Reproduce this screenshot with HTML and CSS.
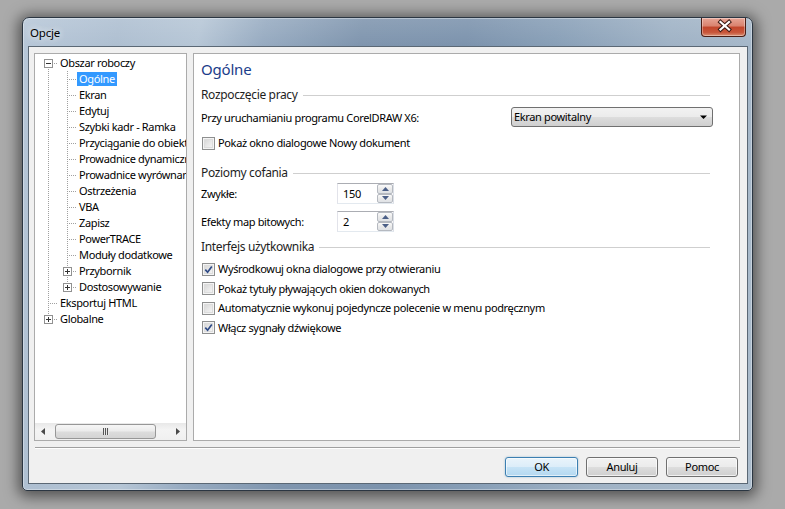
FILE: index.html
```html
<!DOCTYPE html>
<html lang="pl">
<head>
<meta charset="utf-8">
<title>Opcje</title>
<link rel="stylesheet" href="styles.css">
</head>
<body>
<div class="window">
  <div class="titlebar">
    <span class="title">Opcje</span>
    <div class="close">
      <svg width="45" height="19" viewBox="0 0 45 19">
        <path d="M19.5 5 L28 12.5 M28 5 L19.5 12.5" stroke="#3b1a14" stroke-width="4.2" stroke-linecap="square" fill="none"/>
        <path d="M19.5 5 L28 12.5 M28 5 L19.5 12.5" stroke="#ffffff" stroke-width="2.2" stroke-linecap="square" fill="none"/>
      </svg>
    </div>
  </div>
  <div class="client">
    <div class="panels">
      <div class="tree-panel">
        <div class="tree">
          <div class="row"><span class="cell first"><svg class="box" width="9" height="9" viewBox="0 0 9 9"><rect x=".5" y=".5" width="8" height="8" fill="#fff" stroke="#919191"/><path d="M2 4.5h5" stroke="#333"/></svg></span><span class="label">Obszar roboczy</span></div>
          <div class="row"><span class="cell v"></span><span class="cell tee"></span><span class="label sel">Ogólne</span></div>
          <div class="row"><span class="cell v"></span><span class="cell tee"></span><span class="label">Ekran</span></div>
          <div class="row"><span class="cell v"></span><span class="cell tee"></span><span class="label">Edytuj</span></div>
          <div class="row"><span class="cell v"></span><span class="cell tee"></span><span class="label">Szybki kadr - Ramka</span></div>
          <div class="row"><span class="cell v"></span><span class="cell tee"></span><span class="label">Przyciąganie do obiektów</span></div>
          <div class="row"><span class="cell v"></span><span class="cell tee"></span><span class="label">Prowadnice dynamiczne</span></div>
          <div class="row"><span class="cell v"></span><span class="cell tee"></span><span class="label">Prowadnice wyrównania</span></div>
          <div class="row"><span class="cell v"></span><span class="cell tee"></span><span class="label">Ostrzeżenia</span></div>
          <div class="row"><span class="cell v"></span><span class="cell tee"></span><span class="label">VBA</span></div>
          <div class="row"><span class="cell v"></span><span class="cell tee"></span><span class="label">Zapisz</span></div>
          <div class="row"><span class="cell v"></span><span class="cell tee"></span><span class="label">PowerTRACE</span></div>
          <div class="row"><span class="cell v"></span><span class="cell tee"></span><span class="label">Moduły dodatkowe</span></div>
          <div class="row"><span class="cell v"></span><span class="cell tee"><svg class="box" width="9" height="9" viewBox="0 0 9 9"><rect x=".5" y=".5" width="8" height="8" fill="#fff" stroke="#919191"/><path d="M2 4.5h5M4.5 2v5" stroke="#333"/></svg></span><span class="label">Przybornik</span></div>
          <div class="row"><span class="cell v"></span><span class="cell ell"><svg class="box" width="9" height="9" viewBox="0 0 9 9"><rect x=".5" y=".5" width="8" height="8" fill="#fff" stroke="#919191"/><path d="M2 4.5h5M4.5 2v5" stroke="#333"/></svg></span><span class="label">Dostosowywanie</span></div>
          <div class="row"><span class="cell tee"></span><span class="label">Eksportuj HTML</span></div>
          <div class="row"><span class="cell ell"><svg class="box" width="9" height="9" viewBox="0 0 9 9"><rect x=".5" y=".5" width="8" height="8" fill="#fff" stroke="#919191"/><path d="M2 4.5h5M4.5 2v5" stroke="#333"/></svg></span><span class="label">Globalne</span></div>
        </div>
        <div class="hscroll">
          <div class="sb-arrow"><svg width="17" height="17" viewBox="0 0 17 17"><path d="M6 8.5 L10 5 L10 12 Z" fill="#4a4a4a"/></svg></div>
          <div class="sb-thumb"><svg width="8" height="7" viewBox="0 0 8 7"><path d="M1.5 0v7M3.5 0v7M5.5 0v7" stroke="#555" stroke-width="1"/><path d="M2.5 0v7M4.5 0v7M6.5 0v7" stroke="#e8e8e8" stroke-width="1"/></svg></div>
          <div class="sb-rest"></div>
          <div class="sb-arrow"><svg width="17" height="17" viewBox="0 0 17 17"><path d="M11 8.5 L7 5 L7 12 Z" fill="#4a4a4a"/></svg></div>
        </div>
      </div>
      <div class="page">
        <div class="heading">Ogólne</div>
        <div class="group g1"><span class="group-text">Rozpoczęcie pracy</span><span class="group-line"></span></div>
        <div class="dd-row">
          <span class="dd-label">Przy uruchamianiu programu CorelDRAW X6:</span>
          <div class="combo"><span class="combo-text">Ekran powitalny</span><svg width="9" height="6" viewBox="0 0 9 6"><path d="M1 1.5 L8 1.5 L4.5 5 Z" fill="#000"/></svg></div>
        </div>
        <div class="cb-row first-cb"><span class="cb"><span class="cb-in"></span></span><span class="cb-text">Pokaż okno dialogowe Nowy dokument</span></div>
        <div class="group g2"><span class="group-text">Poziomy cofania</span><span class="group-line"></span></div>
        <div class="spin-row s1">
          <span class="spin-label">Zwykłe:</span>
          <div class="spin"><span class="spin-text">150</span><span class="spin-btns"><span class="sbtn"><svg width="7" height="4" viewBox="0 0 7 4"><path d="M0 4 L3.5 0 L7 4 Z" fill="#4b5f87"/></svg></span><span class="sbtn"><svg width="7" height="4" viewBox="0 0 7 4"><path d="M0 0 L7 0 L3.5 4 Z" fill="#4b5f87"/></svg></span></span></div>
        </div>
        <div class="spin-row s2">
          <span class="spin-label">Efekty map bitowych:</span>
          <div class="spin"><span class="spin-text">2</span><span class="spin-btns"><span class="sbtn"><svg width="7" height="4" viewBox="0 0 7 4"><path d="M0 4 L3.5 0 L7 4 Z" fill="#4b5f87"/></svg></span><span class="sbtn"><svg width="7" height="4" viewBox="0 0 7 4"><path d="M0 0 L7 0 L3.5 4 Z" fill="#4b5f87"/></svg></span></span></div>
        </div>
        <div class="group g3"><span class="group-text">Interfejs użytkownika</span><span class="group-line"></span></div>
        <div class="checks">
          <div class="cb-row2"><span class="cb"><span class="cb-in"><svg width="9" height="9" viewBox="0 0 9 9"><path d="M1.3 4.6 L3.6 7.2 L7.8 1.4" stroke="#2e4a86" stroke-width="1.7" fill="none"/></svg></span></span><span class="cb-text">Wyśrodkowuj okna dialogowe przy otwieraniu</span></div>
          <div class="cb-row2"><span class="cb"><span class="cb-in"></span></span><span class="cb-text">Pokaż tytuły pływających okien dokowanych</span></div>
          <div class="cb-row2"><span class="cb"><span class="cb-in"></span></span><span class="cb-text">Automatycznie wykonuj pojedyncze polecenie w menu podręcznym</span></div>
          <div class="cb-row2"><span class="cb"><span class="cb-in"><svg width="9" height="9" viewBox="0 0 9 9"><path d="M1.3 4.6 L3.6 7.2 L7.8 1.4" stroke="#2e4a86" stroke-width="1.7" fill="none"/></svg></span></span><span class="cb-text">Włącz sygnały dźwiękowe</span></div>
        </div>
      </div>
    </div>
    <div class="sep"></div>
    <div class="buttons">
      <div class="btn default">OK</div>
      <div class="btn">Anuluj</div>
      <div class="btn">Pomoc</div>
    </div>
  </div>
</div>
</body>
</html>
```
FILE: styles.css
```css
* { box-sizing: border-box; }
html, body { margin: 0; }
body {
  width: 785px;
  height: 509px;
  overflow: hidden;
  background: #aaaaaa;
  padding: 17px 0 0 22px;
  font-family: "Noto Sans", "Open Sans", sans-serif;
  font-size: 11px;
  letter-spacing: -0.35px;
  color: #000;
}
.window {
  width: 731px;
  height: 474px;
  border: 1px solid #2b3642;
  border-radius: 7px 7px 5px 5px;
  background:
    linear-gradient(180deg, rgba(255,255,255,0.12) 0, rgba(255,255,255,0) 28px),
    linear-gradient(100deg, #b7c7d8 0%, #aebfd1 12%, #b6c6d6 22%, #97abc1 30%, #7f95ae 42%, #7c93ad 55%, #889fb7 66%, #9fb2c5 80%, #acbdcd 100%);
  box-shadow: 0 2px 14px 4px rgba(0,0,0,0.5), inset 0 0 0 1px rgba(255,255,255,0.35);
  display: flex;
  flex-direction: column;
  padding: 0 4px 6px 5px;
}
.titlebar {
  height: 28px;
  display: flex;
  justify-content: space-between;
  align-items: flex-start;
}
.title {
  margin: 7px 0 0 2px;
  line-height: 16px;
  font-size: 11.5px;
  letter-spacing: -0.2px;
  color: #000;
  text-shadow: 0 0 6px rgba(255,255,255,0.8), 0 0 10px rgba(255,255,255,0.5);
}
.close {
  width: 45px;
  height: 19px;
  margin-right: 2px;
  border: 1px solid #4a1d14;
  border-top: none;
  border-radius: 0 0 4px 4px;
  background: linear-gradient(180deg, #e7a596 0%, #d9826e 45%, #c2452b 50%, #c8563a 80%, #d98f73 100%);
  box-shadow: inset 0 0 0 1px rgba(255,255,255,0.35);
  overflow: hidden;
}
.close svg { display: block; margin: -1px 0 0 -1px; }
.client {
  flex: 1;
  border: 1px solid #5b6875;
  background: #f0f0f0;
  display: flex;
  flex-direction: column;
  padding: 6px 7px 6px 5px;
}
.panels {
  height: 388px;
  display: flex;
  gap: 6px;
}
.tree-panel {
  width: 153px;
  border: 1px solid #ababab;
  background: #fff;
  display: flex;
  flex-direction: column;
}
.tree {
  flex: 1;
  overflow: hidden;
  padding: 1px 0 0 4px;
}
.row {
  height: 16px;
  display: flex;
  align-items: center;
  white-space: nowrap;
}
.cell {
  flex: 0 0 19px;
  width: 19px;
  height: 16px;
  background-repeat: no-repeat;
}
.cell .box { display: block; margin: 4px 0 0 5px; }
.cell.v {
  background-image: repeating-linear-gradient(180deg, #a0a0a0 0 1px, transparent 1px 2px);
  background-size: 1px 16px;
  background-position: 9px 0;
}
.cell.tee {
  background-image:
    repeating-linear-gradient(180deg, #a0a0a0 0 1px, transparent 1px 2px),
    repeating-linear-gradient(90deg, #a0a0a0 0 1px, transparent 1px 2px);
  background-size: 1px 16px, 9px 1px;
  background-position: 9px 0, 11px 8px;
}
.cell.ell {
  background-image:
    repeating-linear-gradient(180deg, #a0a0a0 0 1px, transparent 1px 2px),
    repeating-linear-gradient(90deg, #a0a0a0 0 1px, transparent 1px 2px);
  background-size: 1px 8px, 9px 1px;
  background-position: 9px 0, 11px 8px;
}
.cell.first {
  background-image:
    repeating-linear-gradient(180deg, #a0a0a0 0 1px, transparent 1px 2px),
    repeating-linear-gradient(90deg, #a0a0a0 0 1px, transparent 1px 2px);
  background-size: 1px 8px, 9px 1px;
  background-position: 9px 8px, 11px 8px;
}
.label {
  display: inline-block;
  height: 14px;
  line-height: 14px;
  padding: 0 2px;
}
.label.sel { background: #3399ff; color: #fff; }
.hscroll {
  height: 17px;
  flex: 0 0 17px;
  display: flex;
  background: linear-gradient(180deg, #e8e8e8 0, #f4f4f4 40%, #f0f0f0 100%);
}
.sb-arrow { width: 17px; height: 17px; flex: 0 0 17px; }
.sb-arrow svg { display: block; }
.sb-thumb {
  width: 101px;
  height: 15px;
  margin: 1px 0 0 3px;
  border: 1px solid #979797;
  border-radius: 3px;
  background: linear-gradient(180deg, #f6f6f6 0%, #ececec 45%, #dcdcdc 55%, #d4d4d4 100%);
  display: flex;
  align-items: center;
  justify-content: center;
}
.sb-thumb svg { display: block; }
.sb-rest { flex: 1; }
.page {
  flex: 1;
  border: 1px solid #ababab;
  background: #fff;
  padding: 0 26px 0 7px;
  display: flex;
  flex-direction: column;
}
.heading {
  margin-top: 5px;
  height: 20px;
  line-height: 20px;
  font-size: 15px;
  letter-spacing: -0.2px;
  color: #1b3d8a;
}
.group {
  height: 16px;
  display: flex;
  align-items: center;
  line-height: 16px;
  font-size: 12px;
  color: #1e1e1e;
}
.g1 { margin-top: 8px; }
.g2 { margin-top: 14px; }
.g3 { margin-top: 7px; }
.group-line {
  flex: 1;
  height: 1px;
  background: #cfcfcf;
  margin: 1px 3px 0 5px;
}
.dd-row {
  margin-top: 4px;
  height: 20px;
  display: flex;
  align-items: flex-start;
}
.dd-label {
  flex: 1;
  padding-top: 3px;
  line-height: 16px;
}
.combo {
  width: 202px;
  height: 20px;
  border: 1px solid #707070;
  border-radius: 3px;
  background: linear-gradient(180deg, #f2f2f2 0%, #ebebeb 50%, #dddddd 51%, #cfcfcf 100%);
  display: flex;
  align-items: center;
  justify-content: space-between;
  padding: 0 4px 0 2px;
}
.combo-text { line-height: 16px; margin-top: -1px; }
.combo svg { display: block; }
.cb-row {
  height: 16px;
  display: flex;
  align-items: center;
}
.first-cb { margin-top: 8px; }
.cb {
  width: 13px;
  height: 13px;
  margin-left: 1px;
  border: 1px solid #8e8f8f;
  background: #f4f4f4;
  padding: 1px;
  flex: 0 0 13px;
}
.cb-in {
  display: block;
  width: 9px;
  height: 9px;
  background: linear-gradient(135deg, #d5d5d5 0%, #e8e8e8 55%, #f6f6f6 100%);
  box-shadow: inset 0 0 0 1px #dcdcdc;
}
.cb-in svg { display: block; }
.cb-text { margin-left: 3px; line-height: 16px; }
.spin-row {
  height: 21px;
  display: flex;
  align-items: center;
}
.s1 { margin-top: 2px; }
.s2 { margin-top: 7px; }
.spin-label { width: 136px; line-height: 16px; }
.spin {
  width: 57px;
  height: 21px;
  border: 1px solid #abadb3;
  border-left-color: #e2e3ea;
  border-right-color: #dbdfe6;
  border-bottom-color: #e3e9ef;
  background: #fff;
  display: flex;
  align-items: center;
  justify-content: space-between;
}
.spin-text { padding-left: 5px; line-height: 16px; }
.spin-btns {
  width: 16px;
  height: 19px;
  display: flex;
  flex-direction: column;
}
.sbtn {
  flex: 1;
  border: 1px solid #b5b9c0;
  border-radius: 2px;
  background: linear-gradient(180deg, #fafafa 0%, #eaeaea 50%, #dfe2e6 100%);
  display: flex;
  align-items: center;
  justify-content: center;
}
.sbtn svg { display: block; }
.checks { margin-top: 4.5px; display: flex; flex-direction: column; }
.cb-row2 {
  height: 19.5px;
  display: flex;
  align-items: center;
}
.sep {
  margin-top: 6px;
  height: 2px;
  border-top: 1px solid #a0a0a0;
  border-bottom: 1px solid #ffffff;
  margin-left: 1px;
}
.buttons {
  margin-top: 8px;
  height: 20px;
  display: flex;
  justify-content: flex-end;
  gap: 8px;
  padding-right: 2px;
}
.btn {
  width: 72px;
  height: 20px;
  border: 1px solid #707070;
  border-radius: 3px;
  background: linear-gradient(180deg, #f2f2f2 0%, #ebebeb 50%, #dddddd 51%, #cfcfcf 100%);
  box-shadow: inset 0 0 0 1px rgba(255,255,255,0.7);
  text-align: center;
  line-height: 18px;
}
.btn.default {
  width: 73px;
  border-color: #3c7fb1;
  background: linear-gradient(180deg, #e9f4fb 0%, #dcedf9 50%, #c6e3f6 51%, #b3d8f0 100%);
  box-shadow: inset 0 0 0 1px rgba(255,255,255,0.6), 0 0 2px rgba(60,127,177,0.5);
}
```
